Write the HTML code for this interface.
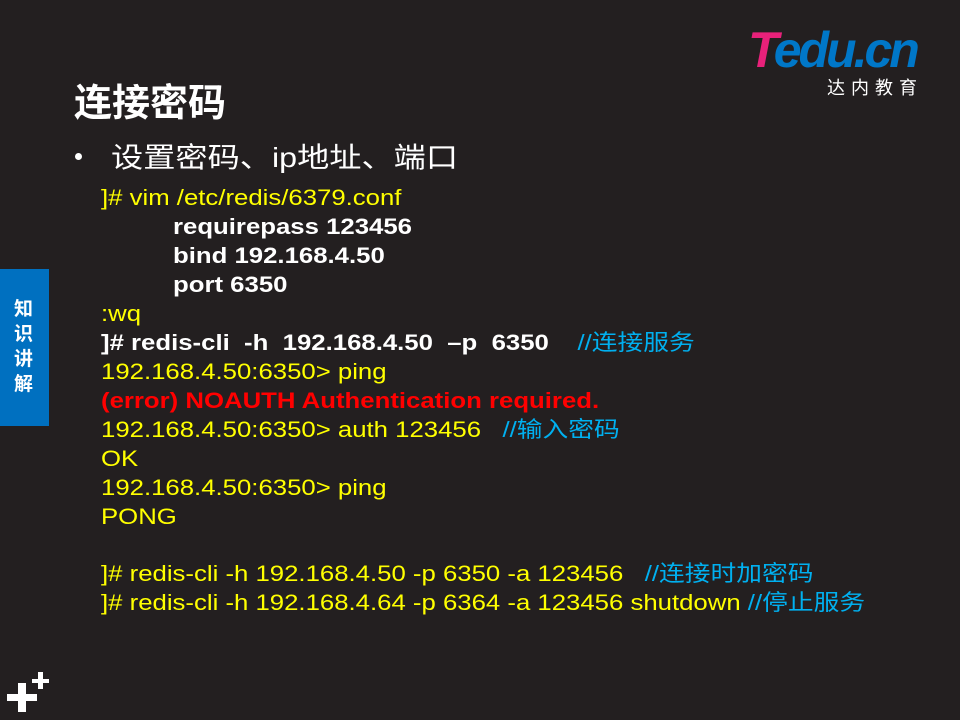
<!DOCTYPE html>
<html><head><meta charset="utf-8"><style>
body{margin:0;width:960px;height:720px;background:#231f20;position:relative;overflow:hidden;font-family:"Liberation Sans","Noto Sans CJK SC",sans-serif}
.a{position:absolute;white-space:pre}
.l{position:absolute;left:101px;font-size:22px;line-height:29px;color:#ffff00;white-space:pre;transform:scaleX(1.17);transform-origin:0 0}
.w{color:#fff;font-weight:bold}.b{color:#00b0f0}.r{color:#ff0000;font-weight:bold}
</style></head><body>
<div class="a" style="left:748px;top:22px;font-size:50px;font-weight:bold;font-style:italic;letter-spacing:-3px;line-height:56px;color:#0077c8"><span style="color:#e8217a">T</span>edu.cn</div>
<div class="a" style="left:827px;top:74px;font-size:18px;color:#fff;letter-spacing:6px">达内教育</div>
<div class="a" style="left:74px;top:72px;font-size:38px;font-weight:bold;color:#fff">连接密码</div>
<div style="position:absolute;left:75px;top:153px;width:7px;height:7px;border-radius:50%;background:#fff"></div>
<div class="a" style="left:111px;top:136px;font-size:28px;color:#fff;transform:scaleX(1.15);transform-origin:0 0">设置密码、ip地址、端口</div>
<div style="position:absolute;left:0;top:269px;width:49px;height:157px;background:#0070c0"></div>
<div class="a" style="left:14px;top:297px;width:20px;font-size:19px;line-height:25px;font-weight:bold;color:#fff;white-space:normal">知识讲解</div>
<svg style="position:absolute;left:0;top:660px" width="60" height="60"><path d="M7 34h30v7H7zM18 23h8v29h-8zM32 19h17v4H32zM38 12h5v17h-5z" fill="#fff"/></svg>
<div class="l" style="top:183px">]# vim /etc/redis/6379.conf</div>
<div class="l w" style="top:212px;left:173px">requirepass 123456</div>
<div class="l w" style="top:241px;left:173px">bind 192.168.4.50</div>
<div class="l w" style="top:270px;left:173px">port 6350</div>
<div class="l" style="top:299px">:wq</div>
<div class="l" style="top:328px"><span class="w">]# redis-cli  -h  192.168.4.50  –p  6350</span>    <span class="b">//连接服务</span></div>
<div class="l" style="top:357px">192.168.4.50:6350&gt; ping</div>
<div class="l r" style="top:386px">(error) NOAUTH Authentication required.</div>
<div class="l" style="top:415px">192.168.4.50:6350&gt; auth 123456   <span class="b">//输入密码</span></div>
<div class="l" style="top:444px">OK</div>
<div class="l" style="top:473px">192.168.4.50:6350&gt; ping</div>
<div class="l" style="top:502px">PONG</div>
<div class="l" style="top:559px">]# redis-cli -h 192.168.4.50 -p 6350 -a 123456   <span class="b">//连接时加密码</span></div>
<div class="l" style="top:588px">]# redis-cli -h 192.168.4.64 -p 6364 -a 123456 shutdown <span class="b">//停止服务</span></div>
</body></html>
